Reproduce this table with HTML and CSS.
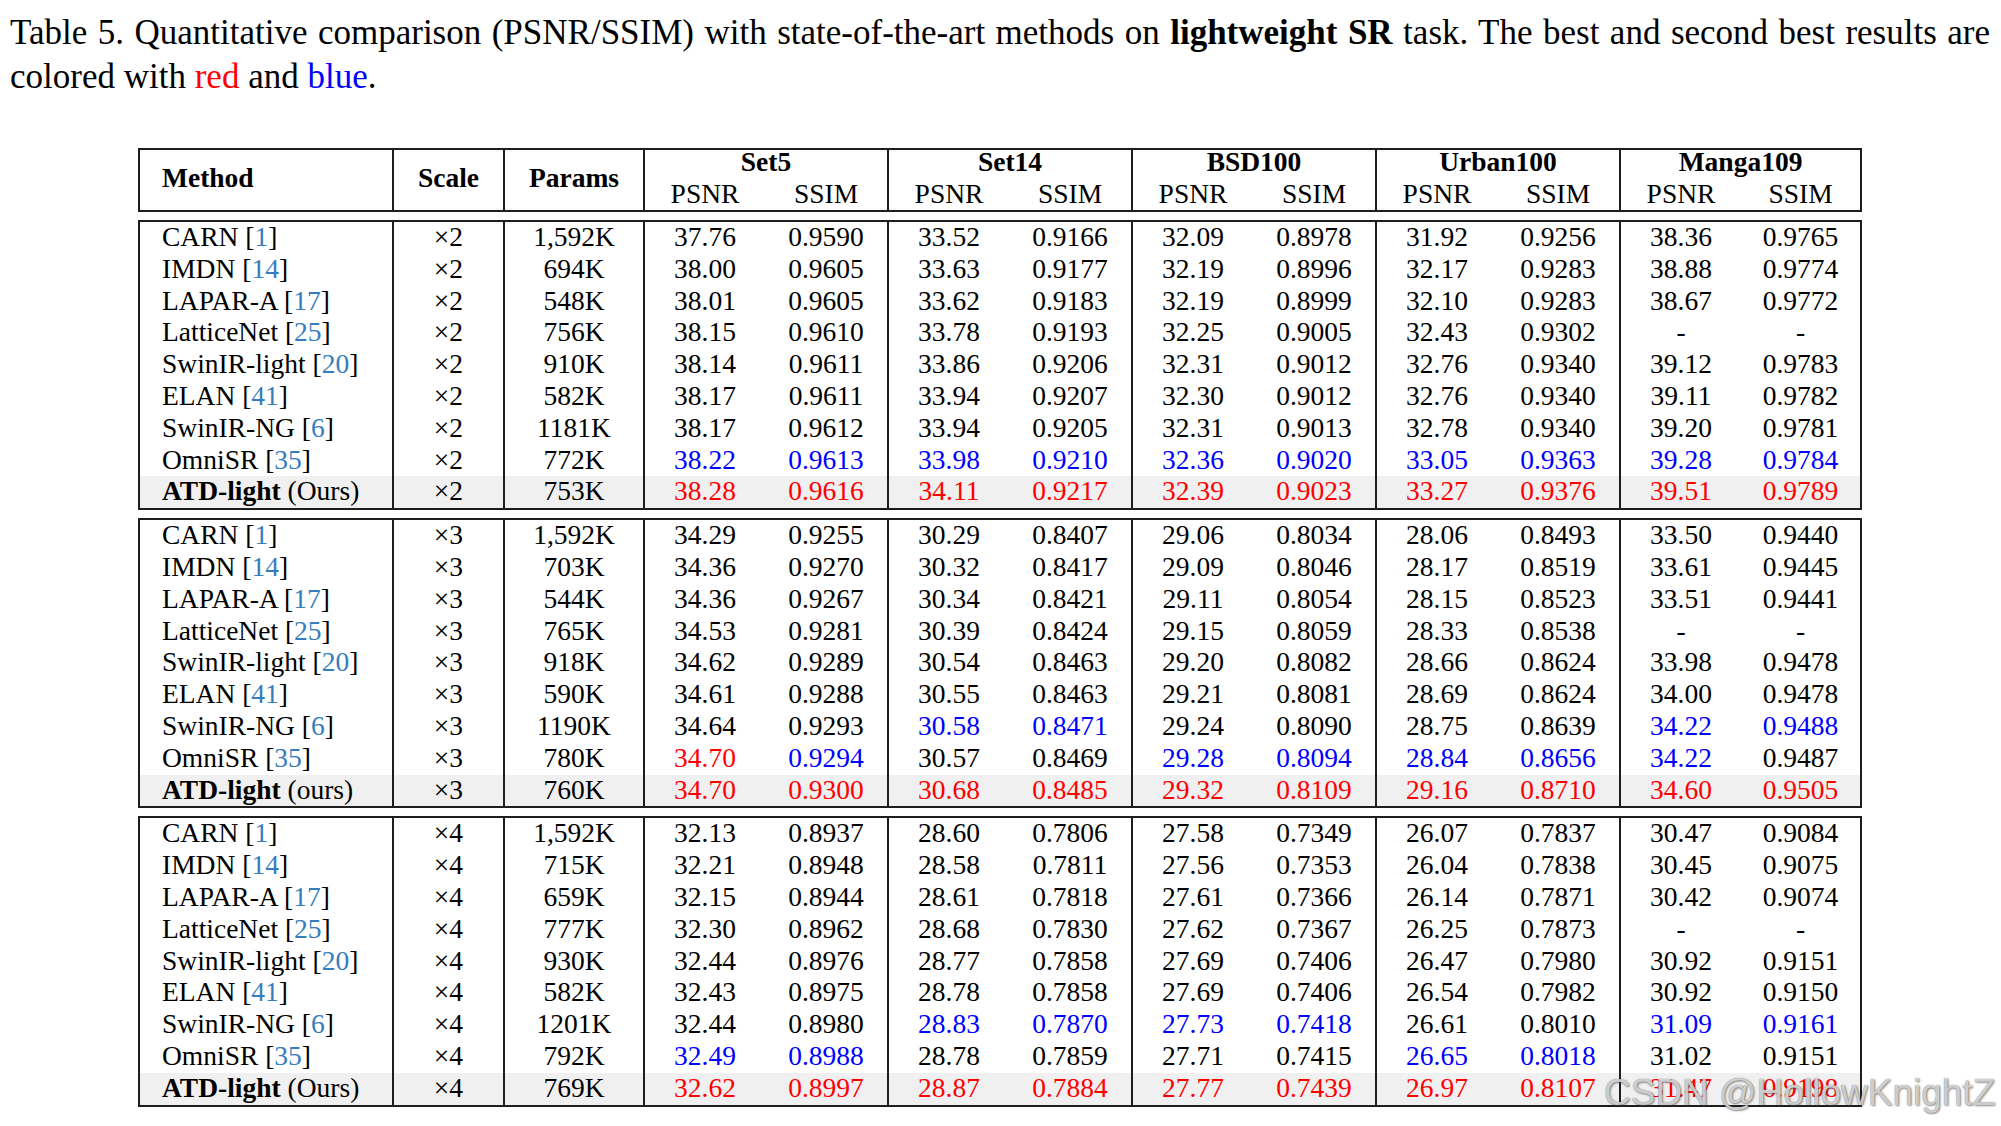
FILE: index.html
```html
<!DOCTYPE html>
<html lang="en">
<head>
<meta charset="utf-8">
<title>Table 5</title>
<link rel="stylesheet" href="styles.css">
</head>
<body>
<div class="caption">
  <span class="cap-line1">Table 5. Quantitative comparison (PSNR/SSIM) with state-of-the-art methods on <b>lightweight SR</b> task. The best and second best results are</span>
  <span class="cap-line2">colored with <span class="r">red</span> and <span class="b">blue</span>.</span>
</div>

<div class="tbl">
  <div class="box head">
    <div class="hc hm">Method</div>
    <div class="hc hs">Scale</div>
    <div class="hc hp">Params</div>
    <div class="ds"><div class="ds-name">Set5</div><div class="ds-sub"><span>PSNR</span><span>SSIM</span></div></div>
    <div class="ds"><div class="ds-name">Set14</div><div class="ds-sub"><span>PSNR</span><span>SSIM</span></div></div>
    <div class="ds"><div class="ds-name">BSD100</div><div class="ds-sub"><span>PSNR</span><span>SSIM</span></div></div>
    <div class="ds"><div class="ds-name">Urban100</div><div class="ds-sub"><span>PSNR</span><span>SSIM</span></div></div>
    <div class="ds"><div class="ds-name">Manga109</div><div class="ds-sub"><span>PSNR</span><span>SSIM</span></div></div>
  </div>

  <div class="box">
    <div class="row"><div class="m">CARN [<span class="cite">1</span>]</div><div class="s">×2</div><div class="p">1,592K</div><div class="v d">37.76</div><div class="v">0.9590</div><div class="v d">33.52</div><div class="v">0.9166</div><div class="v d">32.09</div><div class="v">0.8978</div><div class="v d">31.92</div><div class="v">0.9256</div><div class="v d">38.36</div><div class="v">0.9765</div></div>
    <div class="row"><div class="m">IMDN [<span class="cite">14</span>]</div><div class="s">×2</div><div class="p">694K</div><div class="v d">38.00</div><div class="v">0.9605</div><div class="v d">33.63</div><div class="v">0.9177</div><div class="v d">32.19</div><div class="v">0.8996</div><div class="v d">32.17</div><div class="v">0.9283</div><div class="v d">38.88</div><div class="v">0.9774</div></div>
    <div class="row"><div class="m">LAPAR-A [<span class="cite">17</span>]</div><div class="s">×2</div><div class="p">548K</div><div class="v d">38.01</div><div class="v">0.9605</div><div class="v d">33.62</div><div class="v">0.9183</div><div class="v d">32.19</div><div class="v">0.8999</div><div class="v d">32.10</div><div class="v">0.9283</div><div class="v d">38.67</div><div class="v">0.9772</div></div>
    <div class="row"><div class="m">LatticeNet [<span class="cite">25</span>]</div><div class="s">×2</div><div class="p">756K</div><div class="v d">38.15</div><div class="v">0.9610</div><div class="v d">33.78</div><div class="v">0.9193</div><div class="v d">32.25</div><div class="v">0.9005</div><div class="v d">32.43</div><div class="v">0.9302</div><div class="v d">-</div><div class="v">-</div></div>
    <div class="row"><div class="m">SwinIR-light [<span class="cite">20</span>]</div><div class="s">×2</div><div class="p">910K</div><div class="v d">38.14</div><div class="v">0.9611</div><div class="v d">33.86</div><div class="v">0.9206</div><div class="v d">32.31</div><div class="v">0.9012</div><div class="v d">32.76</div><div class="v">0.9340</div><div class="v d">39.12</div><div class="v">0.9783</div></div>
    <div class="row"><div class="m">ELAN [<span class="cite">41</span>]</div><div class="s">×2</div><div class="p">582K</div><div class="v d">38.17</div><div class="v">0.9611</div><div class="v d">33.94</div><div class="v">0.9207</div><div class="v d">32.30</div><div class="v">0.9012</div><div class="v d">32.76</div><div class="v">0.9340</div><div class="v d">39.11</div><div class="v">0.9782</div></div>
    <div class="row"><div class="m">SwinIR-NG [<span class="cite">6</span>]</div><div class="s">×2</div><div class="p">1181K</div><div class="v d">38.17</div><div class="v">0.9612</div><div class="v d">33.94</div><div class="v">0.9205</div><div class="v d">32.31</div><div class="v">0.9013</div><div class="v d">32.78</div><div class="v">0.9340</div><div class="v d">39.20</div><div class="v">0.9781</div></div>
    <div class="row"><div class="m">OmniSR [<span class="cite">35</span>]</div><div class="s">×2</div><div class="p">772K</div><div class="v d b">38.22</div><div class="v b">0.9613</div><div class="v d b">33.98</div><div class="v b">0.9210</div><div class="v d b">32.36</div><div class="v b">0.9020</div><div class="v d b">33.05</div><div class="v b">0.9363</div><div class="v d b">39.28</div><div class="v b">0.9784</div></div>
    <div class="row ours"><div class="m"><b>ATD-light</b> (Ours)</div><div class="s">×2</div><div class="p">753K</div><div class="v d r">38.28</div><div class="v r">0.9616</div><div class="v d r">34.11</div><div class="v r">0.9217</div><div class="v d r">32.39</div><div class="v r">0.9023</div><div class="v d r">33.27</div><div class="v r">0.9376</div><div class="v d r">39.51</div><div class="v r">0.9789</div></div>
  </div>

  <div class="box">
    <div class="row"><div class="m">CARN [<span class="cite">1</span>]</div><div class="s">×3</div><div class="p">1,592K</div><div class="v d">34.29</div><div class="v">0.9255</div><div class="v d">30.29</div><div class="v">0.8407</div><div class="v d">29.06</div><div class="v">0.8034</div><div class="v d">28.06</div><div class="v">0.8493</div><div class="v d">33.50</div><div class="v">0.9440</div></div>
    <div class="row"><div class="m">IMDN [<span class="cite">14</span>]</div><div class="s">×3</div><div class="p">703K</div><div class="v d">34.36</div><div class="v">0.9270</div><div class="v d">30.32</div><div class="v">0.8417</div><div class="v d">29.09</div><div class="v">0.8046</div><div class="v d">28.17</div><div class="v">0.8519</div><div class="v d">33.61</div><div class="v">0.9445</div></div>
    <div class="row"><div class="m">LAPAR-A [<span class="cite">17</span>]</div><div class="s">×3</div><div class="p">544K</div><div class="v d">34.36</div><div class="v">0.9267</div><div class="v d">30.34</div><div class="v">0.8421</div><div class="v d">29.11</div><div class="v">0.8054</div><div class="v d">28.15</div><div class="v">0.8523</div><div class="v d">33.51</div><div class="v">0.9441</div></div>
    <div class="row"><div class="m">LatticeNet [<span class="cite">25</span>]</div><div class="s">×3</div><div class="p">765K</div><div class="v d">34.53</div><div class="v">0.9281</div><div class="v d">30.39</div><div class="v">0.8424</div><div class="v d">29.15</div><div class="v">0.8059</div><div class="v d">28.33</div><div class="v">0.8538</div><div class="v d">-</div><div class="v">-</div></div>
    <div class="row"><div class="m">SwinIR-light [<span class="cite">20</span>]</div><div class="s">×3</div><div class="p">918K</div><div class="v d">34.62</div><div class="v">0.9289</div><div class="v d">30.54</div><div class="v">0.8463</div><div class="v d">29.20</div><div class="v">0.8082</div><div class="v d">28.66</div><div class="v">0.8624</div><div class="v d">33.98</div><div class="v">0.9478</div></div>
    <div class="row"><div class="m">ELAN [<span class="cite">41</span>]</div><div class="s">×3</div><div class="p">590K</div><div class="v d">34.61</div><div class="v">0.9288</div><div class="v d">30.55</div><div class="v">0.8463</div><div class="v d">29.21</div><div class="v">0.8081</div><div class="v d">28.69</div><div class="v">0.8624</div><div class="v d">34.00</div><div class="v">0.9478</div></div>
    <div class="row"><div class="m">SwinIR-NG [<span class="cite">6</span>]</div><div class="s">×3</div><div class="p">1190K</div><div class="v d">34.64</div><div class="v">0.9293</div><div class="v d b">30.58</div><div class="v b">0.8471</div><div class="v d">29.24</div><div class="v">0.8090</div><div class="v d">28.75</div><div class="v">0.8639</div><div class="v d b">34.22</div><div class="v b">0.9488</div></div>
    <div class="row"><div class="m">OmniSR [<span class="cite">35</span>]</div><div class="s">×3</div><div class="p">780K</div><div class="v d r">34.70</div><div class="v b">0.9294</div><div class="v d">30.57</div><div class="v">0.8469</div><div class="v d b">29.28</div><div class="v b">0.8094</div><div class="v d b">28.84</div><div class="v b">0.8656</div><div class="v d b">34.22</div><div class="v">0.9487</div></div>
    <div class="row ours"><div class="m"><b>ATD-light</b> (ours)</div><div class="s">×3</div><div class="p">760K</div><div class="v d r">34.70</div><div class="v r">0.9300</div><div class="v d r">30.68</div><div class="v r">0.8485</div><div class="v d r">29.32</div><div class="v r">0.8109</div><div class="v d r">29.16</div><div class="v r">0.8710</div><div class="v d r">34.60</div><div class="v r">0.9505</div></div>
  </div>

  <div class="box">
    <div class="row"><div class="m">CARN [<span class="cite">1</span>]</div><div class="s">×4</div><div class="p">1,592K</div><div class="v d">32.13</div><div class="v">0.8937</div><div class="v d">28.60</div><div class="v">0.7806</div><div class="v d">27.58</div><div class="v">0.7349</div><div class="v d">26.07</div><div class="v">0.7837</div><div class="v d">30.47</div><div class="v">0.9084</div></div>
    <div class="row"><div class="m">IMDN [<span class="cite">14</span>]</div><div class="s">×4</div><div class="p">715K</div><div class="v d">32.21</div><div class="v">0.8948</div><div class="v d">28.58</div><div class="v">0.7811</div><div class="v d">27.56</div><div class="v">0.7353</div><div class="v d">26.04</div><div class="v">0.7838</div><div class="v d">30.45</div><div class="v">0.9075</div></div>
    <div class="row"><div class="m">LAPAR-A [<span class="cite">17</span>]</div><div class="s">×4</div><div class="p">659K</div><div class="v d">32.15</div><div class="v">0.8944</div><div class="v d">28.61</div><div class="v">0.7818</div><div class="v d">27.61</div><div class="v">0.7366</div><div class="v d">26.14</div><div class="v">0.7871</div><div class="v d">30.42</div><div class="v">0.9074</div></div>
    <div class="row"><div class="m">LatticeNet [<span class="cite">25</span>]</div><div class="s">×4</div><div class="p">777K</div><div class="v d">32.30</div><div class="v">0.8962</div><div class="v d">28.68</div><div class="v">0.7830</div><div class="v d">27.62</div><div class="v">0.7367</div><div class="v d">26.25</div><div class="v">0.7873</div><div class="v d">-</div><div class="v">-</div></div>
    <div class="row"><div class="m">SwinIR-light [<span class="cite">20</span>]</div><div class="s">×4</div><div class="p">930K</div><div class="v d">32.44</div><div class="v">0.8976</div><div class="v d">28.77</div><div class="v">0.7858</div><div class="v d">27.69</div><div class="v">0.7406</div><div class="v d">26.47</div><div class="v">0.7980</div><div class="v d">30.92</div><div class="v">0.9151</div></div>
    <div class="row"><div class="m">ELAN [<span class="cite">41</span>]</div><div class="s">×4</div><div class="p">582K</div><div class="v d">32.43</div><div class="v">0.8975</div><div class="v d">28.78</div><div class="v">0.7858</div><div class="v d">27.69</div><div class="v">0.7406</div><div class="v d">26.54</div><div class="v">0.7982</div><div class="v d">30.92</div><div class="v">0.9150</div></div>
    <div class="row"><div class="m">SwinIR-NG [<span class="cite">6</span>]</div><div class="s">×4</div><div class="p">1201K</div><div class="v d">32.44</div><div class="v">0.8980</div><div class="v d b">28.83</div><div class="v b">0.7870</div><div class="v d b">27.73</div><div class="v b">0.7418</div><div class="v d">26.61</div><div class="v">0.8010</div><div class="v d b">31.09</div><div class="v b">0.9161</div></div>
    <div class="row"><div class="m">OmniSR [<span class="cite">35</span>]</div><div class="s">×4</div><div class="p">792K</div><div class="v d b">32.49</div><div class="v b">0.8988</div><div class="v d">28.78</div><div class="v">0.7859</div><div class="v d">27.71</div><div class="v">0.7415</div><div class="v d b">26.65</div><div class="v b">0.8018</div><div class="v d">31.02</div><div class="v">0.9151</div></div>
    <div class="row ours"><div class="m"><b>ATD-light</b> (Ours)</div><div class="s">×4</div><div class="p">769K</div><div class="v d r">32.62</div><div class="v r">0.8997</div><div class="v d r">28.87</div><div class="v r">0.7884</div><div class="v d r">27.77</div><div class="v r">0.7439</div><div class="v d r">26.97</div><div class="v r">0.8107</div><div class="v d r">31.47</div><div class="v r">0.9198</div></div>
  </div>
</div>

<div class="watermark">CSDN @HollowKnightZ</div>
</body>
</html>
```

FILE: styles.css
```css
html, body {
  margin: 0;
  padding: 0;
  background: #ffffff;
}

body {
  font-family: "Liberation Serif", "Times New Roman", serif;
  color: #000;
  width: 2001px;
  height: 1126px;
  overflow: hidden;
}

.r { color: #ff0000; }
.b { color: #0000ff; }
.cite { color: #367dbd; }

/* caption */
.caption {
  margin: 11px 0 0 10px;
  width: 1980px;
  font-size: 35px;
  line-height: 44px;
}

.cap-line1 {
  display: block;
  white-space: nowrap;
  text-align: justify;
  text-align-last: justify;
}

.cap-line2 {
  display: block;
}

/* table */
.tbl {
  margin: 49px 0 0 138px;
  width: 1724px;
  display: flex;
  flex-direction: column;
  gap: 8px;
  font-size: 27.5px;
}

.box {
  border: 2px solid #1e1e1e;
}

.head {
  display: grid;
  grid-template-columns: 252px 111px 140px 244px 244px 244px 244px 241px;
  height: 60px;
}

.hc {
  font-weight: bold;
  line-height: 56px;
  text-align: center;
}

.hm {
  text-align: left;
  padding-left: 22px;
}

.hs, .hp, .ds {
  border-left: 2px solid #1e1e1e;
}

.ds {
  text-align: center;
  padding-top: 4px;
}

.ds-name {
  font-weight: bold;
  line-height: 16px;
}

.ds-sub {
  display: grid;
  grid-template-columns: 120px 1fr;
  margin-top: 10px;
  line-height: 28px;
}

.row {
  display: grid;
  grid-template-columns: 252px 111px 140px 122px 122px 122px 122px 122px 122px 122px 122px 122px 119px;
  height: 31.8px;
  line-height: 30px;
  white-space: nowrap;
}

.row.ours {
  background: #f0f0f0;
}

.m {
  padding-left: 22px;
}

.s, .p, .v {
  text-align: center;
}

.s, .p, .d {
  border-left: 2px solid #1e1e1e;
}

/* watermark */
.watermark {
  position: absolute;
  left: 1604px;
  top: 1073px;
  font-family: "Liberation Sans", Arial, sans-serif;
  font-size: 37px;
  line-height: 40px;
  color: rgba(235, 235, 235, 0.78);
  text-shadow: 0 0 1px rgba(70, 70, 70, 0.75), 1px 1px 2px rgba(60, 60, 60, 0.55);
  white-space: nowrap;
}
```
